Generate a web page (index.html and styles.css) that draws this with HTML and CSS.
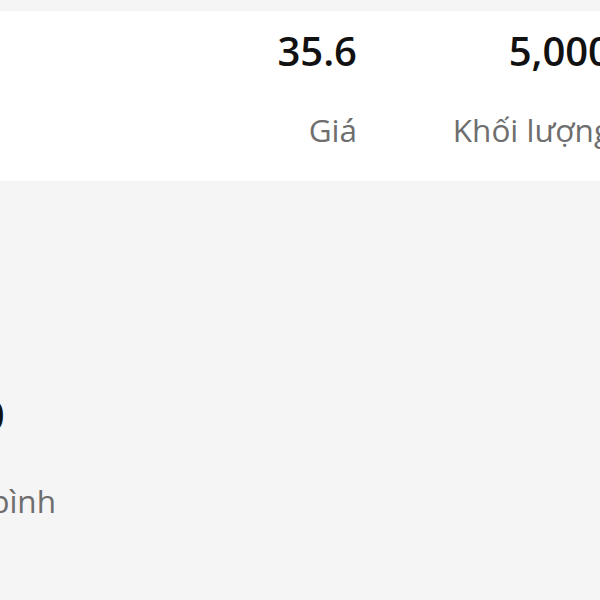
FILE: index.html
```html
<!DOCTYPE html>
<html lang="vi">
<head>
<meta charset="utf-8">
<link rel="stylesheet" href="styles.css">
</head>
<body>
<div class="page">
  <section class="card">
    <div class="stats">
      <div class="stat stat-price">
        <div class="value">35.6</div>
        <div class="label">Giá</div>
      </div>
      <div class="stat stat-volume">
        <div class="value">5,000</div>
        <div class="label">Khối lượng</div>
      </div>
    </div>
  </section>
  <section class="lower">
    <div class="stat stat-avg">
      <div class="value">100</div>
      <div class="label label-avg">Trung bình</div>
    </div>
  </section>
</div>
</body>
</html>
```
FILE: styles.css
```css
html, body {
  margin: 0;
  padding: 0;
  background: #f5f5f5;
  overflow: hidden;
}
body {
  width: 600px;
  height: 600px;
  font-family: "Open Sans", "Noto Sans", sans-serif;
}
.page {
  padding-top: 11px;
  width: 800px;
}
.card {
  background: #ffffff;
  height: 170px;
  box-sizing: border-box;
  padding-top: 15.5px;
}
.stats {
  display: flex;
  padding-left: 207px;
  gap: 100px;
}
.stat {
  display: flex;
  flex-direction: column;
  align-items: flex-end;
}
.stat-price {
  width: 150px;
}
.stat-volume {
  width: 154px;
}
.value {
  font-size: 40px;
  line-height: 48px;
  font-weight: 600;
  color: #111111;
}
.label {
  margin-top: 37px;
  font-size: 31.5px;
  line-height: 36px;
  color: #6e6e6e;
  white-space: nowrap;
}
.lower {
  padding-top: 210px;
  margin-left: -104px;
}
.stat-avg {
  align-items: flex-start;
  width: 200px;
}
.stat-avg .value {
  margin-left: 40px;
}
.label-avg {
  margin-top: 44px;
}
```
